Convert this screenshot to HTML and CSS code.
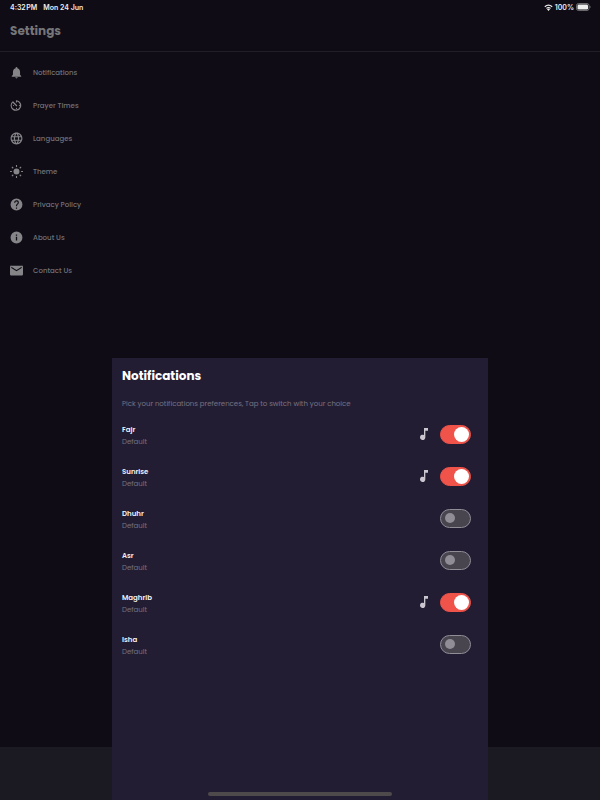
FILE: index.html
```html
<!DOCTYPE html>
<html lang="en">
<head>
  <meta charset="UTF-8">
  <meta name="viewport" content="width=device-width, initial-scale=1">
  <title>Settings</title>
  <link rel="stylesheet" href="styles.css">
</head>
<body>
  <div class="page">
    <div class="status-bar">
      <span>4:32&#8202;PM</span>
      <span>Mon 24 Jun</span>
      <span class="status-right">
        <svg class="wifi" viewBox="0 0 24 18"><path d="M12 18l4-4.500a6 6 0 0 0-8 0zM5.500 10.500l1.800 2a7.500 7.500 0 0 1 9.400 0l1.800-2a10.500 10.500 0 0 0-13 0zM1 5.500l2.300 2.600a13.500 13.500 0 0 1 17.400 0L23 5.500a17 17 0 0 0-22 0z"/></svg>
        <span>100%</span>
        <svg class="battery" viewBox="0 0 30 16"><rect x="1" y="1" width="25" height="14" rx="4" fill="none" stroke="#888" stroke-width="1.500"/><rect x="3" y="3" width="21" height="10" rx="2.500"/><path d="M27.500 5.500c2 .8 2 4.200 0 5z" fill="#888"/></svg>
      </span>
    </div>

    <header class="header">
      <h1>Settings</h1>
    </header>

    <nav class="menu">
      <a href="#notifications">
        <svg viewBox="1 1 22 22"><path d="M12 22c1.100 0 2-.9 2-2h-4c0 1.100.9 2 2 2zm6-6v-5c0-3.070-1.630-5.640-4.500-6.320V4a1.500 1.500 0 0 0-3 0v.68C7.640 5.360 6 7.920 6 11v5l-2 2v1h16v-1z"/></svg>
        Notifications
      </a>
      <a href="#prayer-times">
        <svg viewBox="1 1 22 22"><path d="M11 17a1 1 0 1 0 2 0 1 1 0 0 0-2 0zm0-14v4h2V5.080a7 7 0 1 1-7.440 2.080L12 13.600l1.410-1.410-7.600-7.600v.02A9 9 0 1 0 12 3zm7 9a1 1 0 1 0-2 0 1 1 0 0 0 2 0zM6 12a1 1 0 1 0 2 0 1 1 0 0 0-2 0z"/></svg>
        Prayer Times
      </a>
      <a href="#languages">
        <svg viewBox="1 1 22 22"><path d="M11.990 2C6.470 2 2 6.480 2 12s4.470 10 9.990 10C17.520 22 22 17.520 22 12S17.520 2 11.990 2zm6.930 6h-2.950a15.650 15.650 0 0 0-1.380-3.560A8.030 8.030 0 0 1 18.920 8zM12 4.040c.83 1.200 1.480 2.530 1.910 3.960h-3.820c.43-1.430 1.080-2.760 1.910-3.960zM4.260 14C4.100 13.360 4 12.690 4 12s.1-1.360.26-2h3.380a16.500 16.500 0 0 0 0 4H4.260zm.82 2h2.950c.32 1.250.78 2.450 1.380 3.560A7.990 7.990 0 0 1 5.080 16zm2.950-8H5.080a7.990 7.990 0 0 1 4.330-3.560A15.650 15.650 0 0 0 8.030 8zM12 19.960c-.83-1.200-1.480-2.530-1.910-3.960h3.820c-.43 1.430-1.080 2.760-1.910 3.960zM14.340 14H9.660a14.700 14.700 0 0 1 0-4h4.680a14.700 14.700 0 0 1 0 4zm.25 5.560c.6-1.110 1.060-2.310 1.380-3.560h2.950a8.030 8.030 0 0 1-4.330 3.560zM16.360 14a16.500 16.500 0 0 0 0-4h3.380c.16.640.26 1.310.26 2s-.1 1.360-.26 2h-3.380z"/></svg>
        Languages
      </a>
      <a href="#theme">
        <svg viewBox="0 0 24 24"><circle cx="12" cy="12" r="5.500"/><path d="M12 0v3.500M12 20.500V24M0 12h3.500M20.500 12H24M3.500 3.500L6 6M18 18l2.500 2.500M3.500 20.500L6 18M18 6l2.500-2.500" stroke="currentColor" stroke-width="2"/></svg>
        Theme
      </a>
      <a href="#privacy">
        <svg viewBox="0 0 24 24"><path d="M12 1a11 11 0 1 0 0 22 11 11 0 0 0 0-22zm1.100 18.700h-2.200v-2.200h2.200v2.200zm2.280-8.530l-1 1.020c-.8.800-1.280 1.460-1.280 3.110h-2.200v-.55c0-1.210.5-2.310 1.280-3.110l1.370-1.390A2.200 2.200 0 1 0 9.800 8.700H7.600a4.400 4.400 0 1 1 7.780 2.470z"/></svg>
        Privacy Policy
      </a>
      <a href="#about">
        <svg viewBox="0 0 24 24"><path d="M12 1a11 11 0 1 0 0 22 11 11 0 0 0 0-22zm1.200 16.500h-2.400v-6.700h2.400v6.700zm0-8.800h-2.400V6.300h2.400v2.400z"/></svg>
        About Us
      </a>
      <a href="#contact">
        <svg viewBox="0 0 24 24"><path d="M21.600 3H2.400A2.300 2.300 0 0 0 .1 5.200L0 18.800A2.300 2.300 0 0 0 2.400 21h19.200a2.300 2.300 0 0 0 2.400-2.200V5.200A2.300 2.300 0 0 0 21.600 3zm0 4.500L12 13.300 2.400 7.500V5.200l9.600 5.700 9.600-5.700v2.300z"/></svg>
        Contact Us
      </a>
    </nav>

    <footer class="tab-bar"></footer>
  </div>

  <section class="sheet" id="notifications">
    <div class="sheet-content">
      <h2>Notifications</h2>
      <p class="hint">Pick your notifications preferences, Tap to switch with your choice</p>

      <ul class="prayers">
        <li>
          <label for="fajr">Fajr<small>Default</small></label>
          <button class="sound" aria-label="Fajr sound"><svg viewBox="6 3 12 18"><path d="M12 3v10.550A4 4 0 1 0 14 17V7h4V3z"/></svg></button>
          <input type="checkbox" class="switch" id="fajr" checked>
        </li>
        <li>
          <label for="sunrise">Sunrise<small>Default</small></label>
          <button class="sound" aria-label="Sunrise sound"><svg viewBox="6 3 12 18"><path d="M12 3v10.550A4 4 0 1 0 14 17V7h4V3z"/></svg></button>
          <input type="checkbox" class="switch" id="sunrise" checked>
        </li>
        <li>
          <label for="dhuhr">Dhuhr<small>Default</small></label>
          <input type="checkbox" class="switch" id="dhuhr">
        </li>
        <li>
          <label for="asr">Asr<small>Default</small></label>
          <input type="checkbox" class="switch" id="asr">
        </li>
        <li>
          <label for="maghrib">Maghrib<small>Default</small></label>
          <button class="sound" aria-label="Maghrib sound"><svg viewBox="6 3 12 18"><path d="M12 3v10.550A4 4 0 1 0 14 17V7h4V3z"/></svg></button>
          <input type="checkbox" class="switch" id="maghrib" checked>
        </li>
        <li>
          <label for="isha">Isha<small>Default</small></label>
          <input type="checkbox" class="switch" id="isha">
        </li>
      </ul>
    </div>

    <div class="home-indicator"></div>
  </section>
</body>
</html>
```
FILE: styles.css
```css
* {
  box-sizing: border-box;
}

body {
  margin: 0;
  background-color: #0f0c16;
  color: #fff;
  font-family: Poppins, Inter, "Open Sans", sans-serif;
  font-size: 7px;
}

svg {
  display: block;
  fill: currentColor;
}

h1, h2, p, ul {
  margin: 0;
  padding: 0;
}

.page {
  display: flex;
  flex-direction: column;
  min-height: 100vh;
}

.status-bar {
  display: flex;
  align-items: center;
  gap: 6px;
  height: 14px;
  padding: 0 9px 0 10px;
  font-family: Inter, sans-serif;
  font-weight: 600;
  color: #eee;
}

.status-right {
  display: flex;
  align-items: center;
  gap: 2px;
  margin-left: auto;
}

.wifi {
  width: 9px;
  height: 7px;
}

.battery {
  width: 15px;
  height: 8px;
}

.header {
  height: 38px;
  padding: 8px 10px;
  border-bottom: 1px solid #211e28;
  color: #767578;
}

h1, h2 {
  font-size: 12px;
  line-height: 17px;
}

.menu {
  flex: 1;
  padding-top: 4px;
}

.menu a {
  display: flex;
  align-items: center;
  gap: 10px;
  height: 33px;
  padding: 0 10px;
  color: #737276;
  font-weight: 500;
  text-decoration: none;
}

.menu svg {
  width: 13px;
  height: 13px;
  color: #858487;
}

.tab-bar {
  height: 53px;
  background-color: #1b1922;
}

/* bottom sheet over the settings page */
.sheet {
  position: fixed;
  bottom: 0;
  left: 0;
  right: 0;
  display: flex;
  flex-direction: column;
  width: calc(62.5% + 1px);
  min-height: 442px;
  margin: 0 auto;
  padding: 9px 0 4px;
  background-color: #231d34;
}

.sheet-content {
  padding: 0 17px 0 10px;
}

.hint {
  padding: 15px 0 4px;
  line-height: 10px;
  color: #77727f;
}

.prayers {
  list-style: none;
}

.prayers li {
  display: flex;
  align-items: center;
  gap: 12px;
  height: 42px;
}

.prayers label {
  flex: 1;
  padding-top: 4px;
  font-weight: 600;
  line-height: 12px;
  color: #f3f2f5;
}

.prayers small {
  display: block;
  font-size: 7px;
  font-weight: 400;
  color: #77727f;
}

.sound {
  padding: 0;
  border: 0;
  background: none;
  color: #cac5cf;
}

.sound svg {
  width: 8px;
  height: 12px;
}

.switch {
  appearance: none;
  display: flex;
  align-items: center;
  width: 31px;
  height: 19px;
  margin: 0;
  padding: 0 4px;
  border: 1px solid #918d97;
  border-radius: 10px;
  background-color: #48454f;
}

.switch::before {
  content: "";
  width: 10px;
  height: 10px;
  border-radius: 50%;
  background-color: #918d97;
}

.switch:checked {
  justify-content: flex-end;
  padding: 0 1px;
  border-color: #ef5349;
  background-color: #ef5349;
}

.switch:checked::before {
  width: 15px;
  height: 15px;
  background-color: #fff;
}

.home-indicator {
  width: 184px;
  height: 4px;
  margin: auto auto 0;
  border-radius: 2px;
  background-color: #4e4a4b;
}
```
